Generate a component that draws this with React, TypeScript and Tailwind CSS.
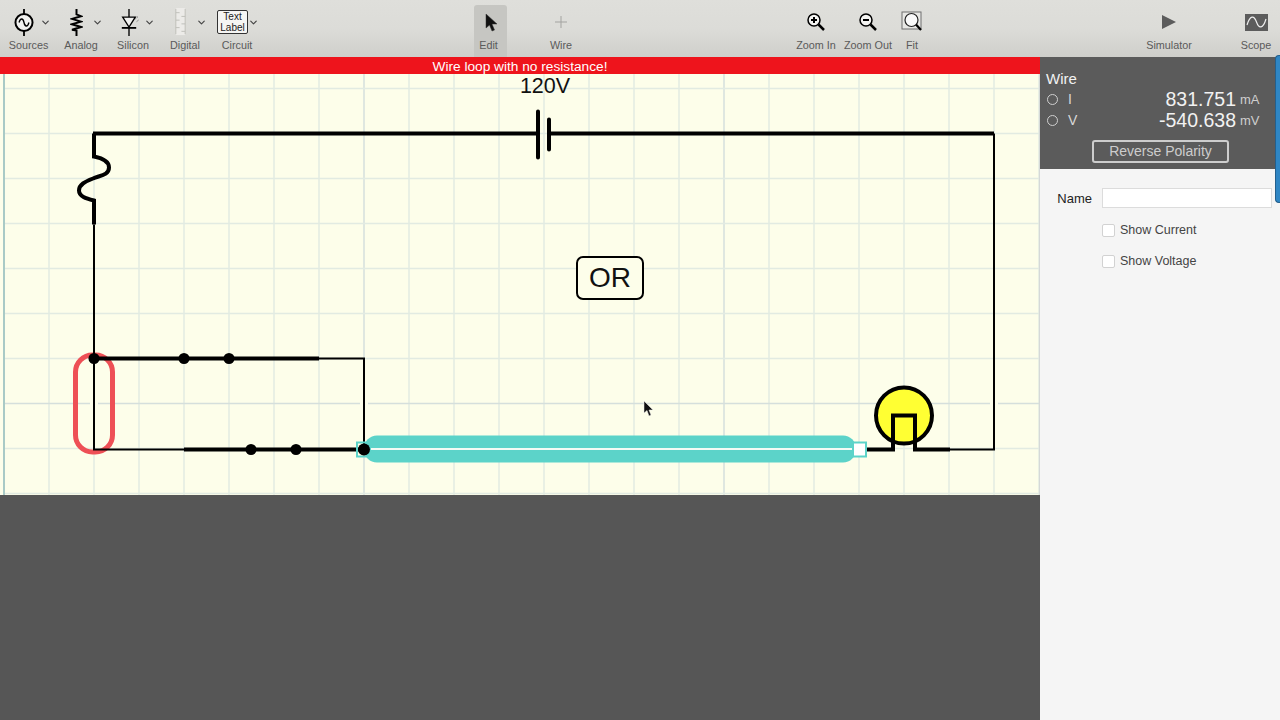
import type { ReactNode } from 'react';
import { ChevronDown } from 'lucide-react';

const verticals = Array.from({ length: 23 }, (_, i) => 49 + i * 45);
const horizontals = [88, 133, 178, 223, 268, 313, 358, 403, 448, 493];

function ToolItem({ label, icon, chevron, className }: { label: string; icon: ReactNode; chevron?: boolean; className: string }) {
  return (
    <div className={`relative flex flex-col items-center shrink-0 h-[57px] ${className}`}>
      <div className={`h-[38px] w-full pt-[6px] flex items-center justify-center ${chevron ? 'pr-[9px]' : ''}`}>{icon}</div>
      <span className="text-[10.800px] leading-[14px] text-[#5a5a5a] whitespace-nowrap">{label}</span>
      {chevron && <ChevronDown className="absolute right-[4.500px] top-[17px] text-[#444]" size={11} strokeWidth={2.5} />}
    </div>
  );
}

function SourcesIcon() {
  return (
    <svg width="22" height="27" viewBox="0 0 24 30" fill="none" stroke="#000">
      <path d="M12 0V6M12 24V30" strokeWidth="2" />
      <circle cx="12" cy="15" r="9.500" strokeWidth="2.200" fill="#f2f2f0" />
      <path d="M6.500 15C8 9.500 11 10 12 15C13 20 16 20.500 17.500 15" strokeWidth="1.500" />
    </svg>
  );
}

function AnalogIcon() {
  return (
    <svg width="13" height="27" viewBox="0 0 14 30" fill="none" stroke="#000" strokeWidth="2.200">
      <path d="M7 0V6L12 8L2 11L12 14L2 17L12 20L2 23L7 24V30" />
    </svg>
  );
}

function SiliconIcon() {
  return (
    <svg width="20" height="27" viewBox="-3 0 22 30" fill="none" stroke="#000">
      <path d="M8 0V9M8 20V30" strokeWidth="1.500" />
      <path d="M1 9H15L8 20Z" strokeWidth="1.500" fill="#f2f2f0" />
      <path d="M0 21H16" strokeWidth="2" />
      <path d="M15 11L18 8.500M16.500 14L19 12" strokeWidth="1" stroke="#666" strokeDasharray="1.500 1" />
    </svg>
  );
}

function DigitalIcon() {
  return (
    <svg width="15" height="28" viewBox="0 0 16 30" fill="none">
      <rect x="3" y="0" width="10" height="29" fill="#ecebe8" />
      <path d="M3 1V28M13 1V28M3 5H7M9 9H13M3 13H7M9 17H13M3 21H7M9 25H13" stroke="#bdbdb8" strokeWidth="1" />
    </svg>
  );
}

function ZoomIcon({ plus }: { plus?: boolean }) {
  return (
    <svg width="20" height="20" viewBox="0 0 20 20" fill="none" stroke="#000">
      <circle cx="8" cy="8" r="6" strokeWidth="1.500" fill="#f4f4f2" />
      <path d="M12.500 12.500L18 18" strokeWidth="2.500" />
      <path d={plus ? 'M5 8H11M8 5V11' : 'M5 8H11'} strokeWidth="2" />
    </svg>
  );
}

function FitIcon() {
  return (
    <svg width="22" height="22" viewBox="0 0 22 22" fill="none">
      <rect x="1" y="1" width="19" height="17" stroke="#6f6f6f" strokeWidth="1" fill="#e8e8e5" />
      <circle cx="10.500" cy="9" r="6.500" stroke="#222" strokeWidth="1.200" fill="#fafafa" />
      <path d="M15 13.500L20 19" stroke="#000" strokeWidth="2.200" />
    </svg>
  );
}

function Toolbar() {
  return (
    <div className="flex h-[57px] shrink-0 pl-[2px] bg-gradient-to-b from-[#dfdfdb] via-[#dcdcd8] to-[#cfcfcb]">
      <ToolItem label="Sources" icon={<SourcesIcon />} chevron className="w-[53px]" />
      <ToolItem label="Analog" icon={<AnalogIcon />} chevron className="w-[52px]" />
      <ToolItem label="Silicon" icon={<SiliconIcon />} chevron className="w-[52px]" />
      <ToolItem label="Digital" icon={<DigitalIcon />} chevron className="w-[52px]" />
      <ToolItem
        label="Circuit"
        chevron
        className="w-[52px]"
        icon={
          <div className="w-[31px] h-[24px] border border-[#333] rounded-[2px] bg-[#f5f5f3] flex items-center justify-center text-center text-[10px] leading-[11px] text-[#222]">
            Text
            <br />
            Label
          </div>
        }
      />
      <div className="ml-[211px] w-[33px] rounded-t-[3px] bg-[#c6c6c2] mt-[5px] h-[52px] shrink-0 flex flex-col items-center">
        <div className="h-[33px] pt-[1px] flex items-center justify-center">
          <svg width="14" height="19" viewBox="0 0 14 19">
            <path d="M2 1V15L5.500 12L8 18L10.500 17L8 11H13Z" fill="#111" stroke="#333" strokeWidth="0.500" />
          </svg>
        </div>
        <span className="pr-[4px] text-[10.800px] leading-[14px] text-[#5a5a5a]">Edit</span>
      </div>
      <ToolItem
        label="Wire"
        className="ml-[34px] w-[40px]"
        icon={
          <svg width="14" height="14" viewBox="0 0 14 14" stroke="#a3a3a0" strokeWidth="1">
            <path d="M7 1V13M1 7H13" />
          </svg>
        }
      />
      <ToolItem label="Zoom In" icon={<ZoomIcon plus />} className="ml-[209px] w-[52px]" />
      <ToolItem label="Zoom Out" icon={<ZoomIcon />} className="w-[52px]" />
      <ToolItem label="Fit" icon={<FitIcon />} className="ml-[6px] w-[24px]" />
      <ToolItem
        label="Simulator"
        className="ml-[212px] w-[66px]"
        icon={
          <svg width="14" height="16" viewBox="0 0 14 16">
            <path d="M0 1L14 8L0 15Z" fill="#5c5c5c" />
          </svg>
        }
      />
      <ToolItem
        label="Scope"
        className="ml-[30px] w-[48px]"
        icon={
          <svg width="23" height="17" viewBox="0 0 23 17" fill="none">
            <rect width="23" height="17" fill="#5c5c5c" />
            <path d="M2 11C5 1 9 1 11.500 8C14 15 18 15 21 5" stroke="#f0f0f0" strokeWidth="1.200" />
          </svg>
        }
      />
    </div>
  );
}

function Circuit() {
  return (
    <svg className="block w-[1040px] h-[421px] shrink-0" viewBox="0 73.500 1040 421" fill="none">
      <rect x="0" y="70" width="1040" height="430" fill="#fdfeea" />
      {verticals.map((x) => (
        <path key={x} d={`M${x} 70V500`} stroke={x === 364 || x === 724 ? '#d5dfdc' : '#e2ebe2'} strokeWidth="1.500" />
      ))}
      {horizontals.map((y) => (
        <path key={y} d={`M4 ${y}H1040`} stroke={y === 403 ? '#d5dfdc' : '#e2ebe2'} strokeWidth="1.500" />
      ))}
      <path d="M4 70V500" stroke="#a9cac6" strokeWidth="2" />
      <path d="M1039.500 70V500" stroke="#d5d9d8" strokeWidth="1" />
      <path d="M90 403H98M360 403H368M990 403H998" stroke="#fdfeea" strokeWidth="3" />

      <rect x="75.500" y="354.500" width="37" height="97" rx="17" stroke="#ee5056" strokeWidth="5" />

      {/* source and fuse */}
      <path d="M93 133H537M551 133H994" stroke="#000" strokeWidth="4" />
      <path d="M538 111V157M549 119V149" stroke="#000" strokeWidth="4" strokeLinecap="round" />
      <path
        d="M94 133V156C104 158 109 161 109 167C109 175 99 175 93 178C85 181 79 184 79 190C79 196 86 198 94 200V224"
        stroke="#000"
        strokeWidth="4"
      />
      <path d="M94 224V449H184M994 133V449H950M319 358H364V449" stroke="#000" strokeWidth="2" />

      {/* switches */}
      <path d="M94 358H319M184 449H364" stroke="#000" strokeWidth="4" />
      {[[94, 358], [184, 358], [229, 358], [251, 449], [296, 449]].map(([cx, cy]) => (
        <circle key={cx} cx={cx} cy={cy} r="5.500" fill="#000" />
      ))}

      {/* selected wire */}
      <rect x="364" y="435" width="492" height="27" rx="13" fill="#5cd3c9" />
      <path d="M370 448.500H852" stroke="#f4fbf5" strokeWidth="2" />
      <rect x="357" y="442" width="13" height="14" stroke="#5cd3c9" strokeWidth="2" />
      <circle cx="364" cy="449" r="6" fill="#000" />
      <rect x="853" y="442" width="13" height="14" fill="#fff" stroke="#5cd3c9" strokeWidth="2" />

      {/* lamp */}
      <circle cx="904" cy="415" r="28" fill="#ffff33" stroke="#000" strokeWidth="4" />
      <path d="M867 449H893V415H915V449H950" stroke="#000" strokeWidth="4" />

      <text x="545" y="92.500" textAnchor="middle" fill="#111" fontSize="21.500" fontFamily="Liberation Sans, sans-serif">
        120V
      </text>
      <rect x="577" y="256.500" width="66" height="42" rx="6" fill="#fdfeea" stroke="#000" strokeWidth="2" />
      <text x="610" y="286.500" textAnchor="middle" fill="#111" fontSize="28" fontFamily="Liberation Sans, sans-serif">
        OR
      </text>

      <path d="M644 400.500V412.500L647 410L649 415.500L651 414.500L649 409.500H653Z" fill="#111" stroke="#eee" strokeWidth="0.500" />
    </svg>
  );
}

function Readout({ name, value, unit }: { name: string; value: string; unit: string }) {
  return (
    <div className="flex items-center h-[21px]">
      <span className="w-[11px] h-[11px] ml-[1px] rounded-full border border-[#cfcfcf]" />
      <span className="ml-[10px] text-[14px] text-[#d8d8d8]">{name}</span>
      <span className="ml-auto text-[19.500px] text-[#f2f2f2]">{value}</span>
      <span className="ml-[4px] w-[20px] text-[13px] text-[#cfcfcf]">{unit}</span>
    </div>
  );
}

function SidePanel() {
  return (
    <div className="relative w-[240px] shrink-0 bg-[#f5f5f5]">
      <div className="h-[112px] bg-[#5b5b5b] pl-[6px] pr-[20px] pt-[13px]">
        <div className="text-[15px] leading-[18px] mb-[1px] text-[#f2f2f2]">Wire</div>
        <Readout name="I" value="831.751" unit="mA" />
        <Readout name="V" value="-540.638" unit="mV" />
        <div className="ml-[46px] mt-[9px] w-[137px] h-[23px] border-2 border-[#cdcdcd] rounded-[3px] flex items-center justify-center text-[14px] text-[#cdcdcd]">
          Reverse Polarity
        </div>
      </div>
      <div className="flex items-center mt-[19px]">
        <label className="w-[52px] pt-[1px] text-right text-[13px] text-[#222]">Name</label>
        <input className="ml-[10px] w-[170px] h-[20px] bg-white border border-[#dcdcdc] outline-none" />
      </div>
      <div className="flex flex-col gap-[18px] mt-[15px] ml-[62px]">
        {['Show Current', 'Show Voltage'].map((label) => (
          <div key={label} className="flex items-center h-[13px] gap-[5px]">
            <span className="w-[13px] h-[13px] bg-white border border-[#d2d2d2] rounded-[2px]" />
            <span className="text-[12.500px] text-[#444]">{label}</span>
          </div>
        ))}
      </div>
      <div className="absolute right-0 top-[-2px] w-[5px] h-[148px] bg-[#2f86c4] border border-[#245f8c] border-r-0 rounded-l-[4px]" />
    </div>
  );
}

export default function App() {
  return (
    <div className="flex flex-col w-[1280px] h-[720px] overflow-hidden font-['Liberation_Sans',sans-serif]">
      <Toolbar />
      <div className="flex flex-1 min-h-0">
        <div className="flex flex-col w-[1040px] shrink-0">
          <div className="h-[17px] shrink-0 bg-[#ee141c] text-center text-[13.700px] leading-[19px] text-white">
            Wire loop with no resistance!
          </div>
          <Circuit />
          <div className="flex-1 bg-[#565656]" />
        </div>
        <SidePanel />
      </div>
    </div>
  );
}
